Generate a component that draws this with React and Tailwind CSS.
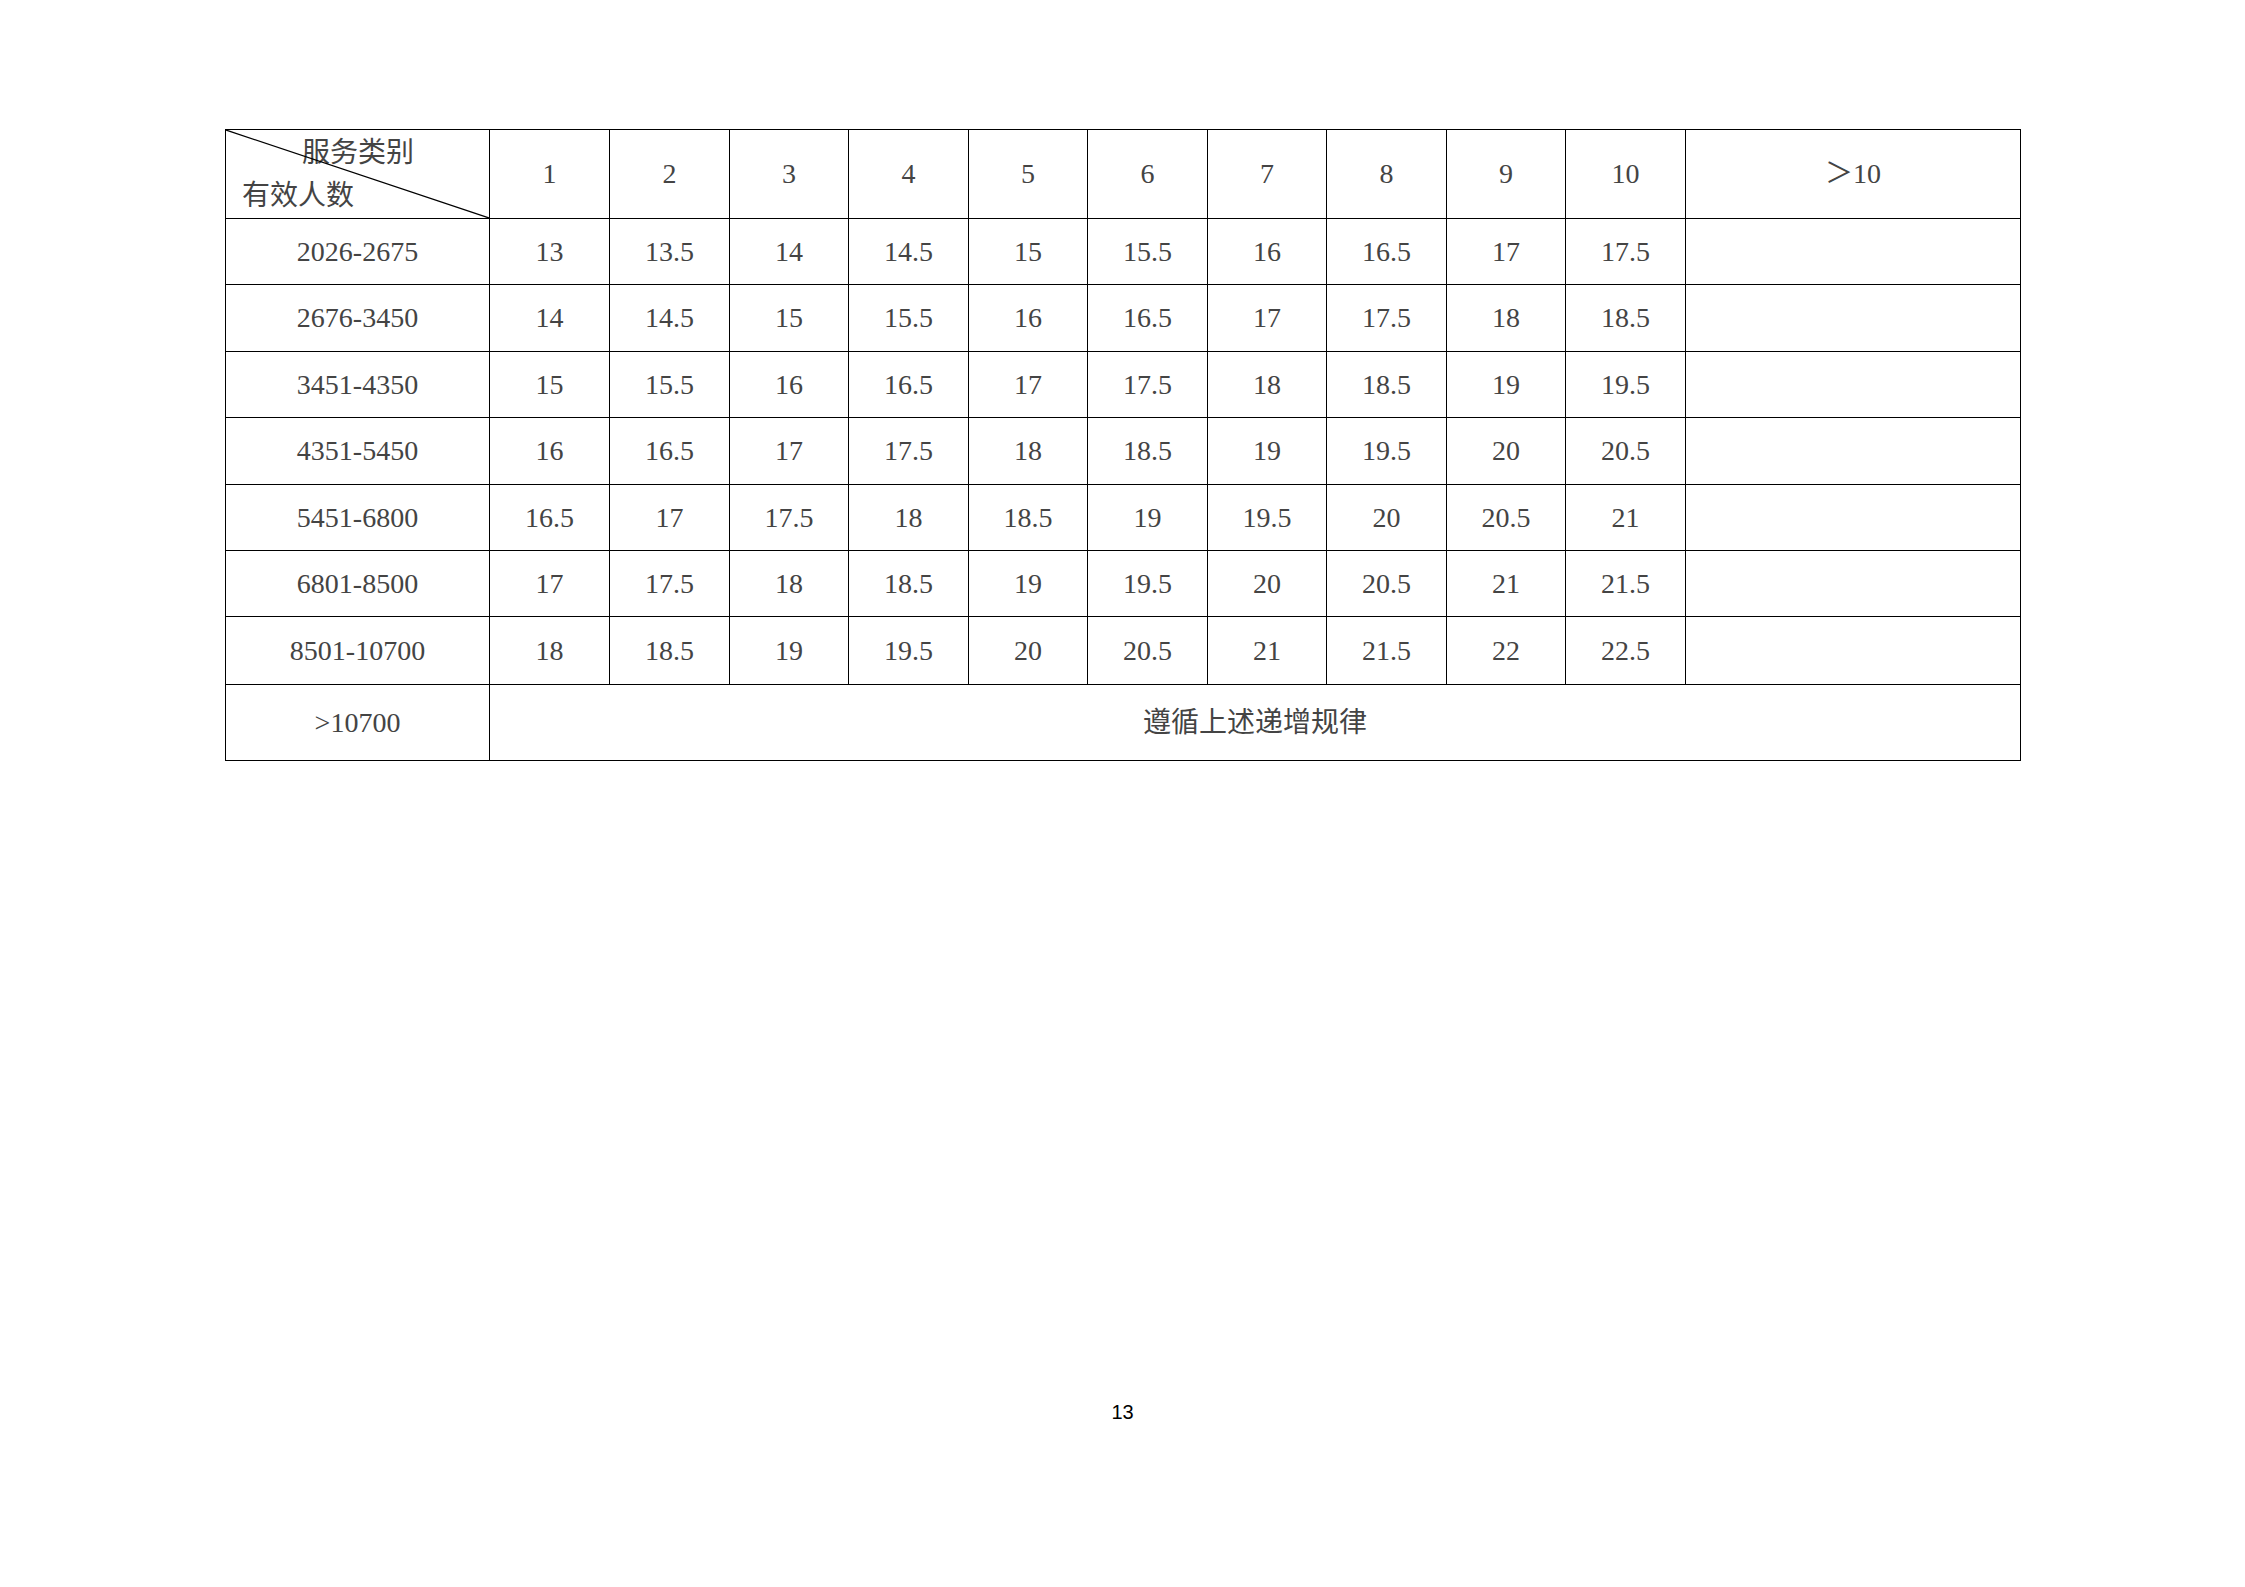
import React from "react";

const COLS = ["1", "2", "3", "4", "5", "6", "7", "8", "9", "10"];

const ROWS = [
  { range: "2026-2675", h: "h-[66px]", vals: ["13", "13.5", "14", "14.5", "15", "15.5", "16", "16.5", "17", "17.5"] },
  { range: "2676-3450", h: "h-[67px]", vals: ["14", "14.5", "15", "15.5", "16", "16.5", "17", "17.5", "18", "18.5"] },
  { range: "3451-4350", h: "h-[66px]", vals: ["15", "15.5", "16", "16.5", "17", "17.5", "18", "18.5", "19", "19.5"] },
  { range: "4351-5450", h: "h-[67px]", vals: ["16", "16.5", "17", "17.5", "18", "18.5", "19", "19.5", "20", "20.5"] },
  { range: "5451-6800", h: "h-[66px]", vals: ["16.5", "17", "17.5", "18", "18.5", "19", "19.5", "20", "20.5", "21"] },
  { range: "6801-8500", h: "h-[66px]", vals: ["17", "17.5", "18", "18.5", "19", "19.5", "20", "20.5", "21", "21.5"] },
  { range: "8501-10700", h: "h-[68px]", vals: ["18", "18.5", "19", "19.5", "20", "20.5", "21", "21.5", "22", "22.5"] },
];

const cell = "border border-black text-center align-middle p-0";

export default function App() {
  return (
    <div className="w-[2245px] h-[1587px] bg-white flex flex-col pt-[129px] pl-[225px] font-['Liberation_Serif','Noto_Sans_CJK_SC',serif] text-[28px] text-[#444444]">
      <table className="table-fixed border-collapse w-[1795px]">
        <colgroup>
          <col className="w-[264px]" />
          <col className="w-[120px]" />
          <col className="w-[120px]" />
          <col className="w-[119px]" />
          <col className="w-[120px]" />
          <col className="w-[119px]" />
          <col className="w-[120px]" />
          <col className="w-[119px]" />
          <col className="w-[120px]" />
          <col className="w-[119px]" />
          <col className="w-[120px]" />
          <col className="w-[335px]" />
        </colgroup>
        <tbody>
          <tr>
            <td className={`${cell} h-[89px] relative text-left`}>
              <svg className="absolute inset-0 w-full h-full" preserveAspectRatio="none" viewBox="0 0 100 100">
                <line x1="0" y1="0" x2="100" y2="100" stroke="#000" strokeWidth="1.2" vectorEffect="non-scaling-stroke" />
              </svg>
              <div className="leading-[43px]">
                <div className="pl-[76px]">服务类别</div>
                <div className="pl-[16px]">有效人数</div>
              </div>
            </td>
            {COLS.map((c) => (
              <td key={c} className={cell}>{c}</td>
            ))}
            <td className={cell}>＞10</td>
          </tr>
          {ROWS.map((r) => (
            <tr key={r.range}>
              <td className={`${cell} ${r.h}`}>{r.range}</td>
              {r.vals.map((v, i) => (
                <td key={i} className={cell}>{v}</td>
              ))}
              <td className={cell}></td>
            </tr>
          ))}
          <tr>
            <td className={`${cell} h-[76px]`}>&gt;10700</td>
            <td className={cell} colSpan={11}>遵循上述递增规律</td>
          </tr>
        </tbody>
      </table>
      <div className="mt-[641px] -ml-[225px] text-center font-['Liberation_Sans',sans-serif] text-[20px] leading-none text-black">
        13
      </div>
    </div>
  );
}
